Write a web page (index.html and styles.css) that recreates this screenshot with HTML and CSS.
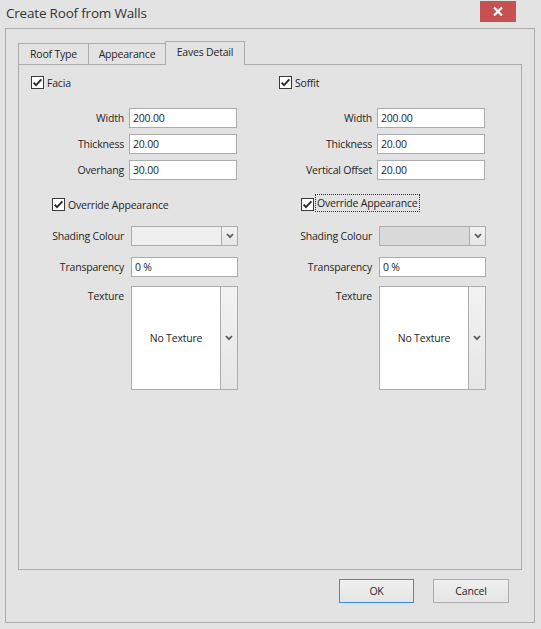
FILE: index.html
```html
<!DOCTYPE html>
<html>
<head>
<meta charset="utf-8">
<link rel="stylesheet" href="styles.css">
</head>
<body>
<div class="window">
  <div class="titlebar">
    <span class="title">Create Roof from Walls</span>
    <div class="close"><svg width="10" height="9" viewBox="0 0 10 9"><path d="M1 0.5 L9 8.5 M9 0.5 L1 8.5" stroke="#fff" stroke-width="2.2"/></svg></div>
  </div>
  <div class="frame">
    <div class="tabs">
      <div class="tab t1">Roof Type</div>
      <div class="tab t2">Appearance</div>
      <div class="tab t3 active">Eaves Detail</div>
    </div>
    <div class="page">
      <div class="col">
        <div class="check-row">
          <span class="cb"><svg width="11" height="11" viewBox="0 0 11 11"><polyline points="1.6,5.6 4,8.2 9.4,2.4" fill="none" stroke="#2b2b2b" stroke-width="1.9"/></svg></span>
          <span class="cb-label">Facia</span>
        </div>
        <div class="fields">
          <label>Width</label><div class="input">200.00</div>
          <label>Thickness</label><div class="input">20.00</div>
          <label>Overhang</label><div class="input">30.00</div>
        </div>
        <div class="check-row override">
          <span class="cb"><svg width="11" height="11" viewBox="0 0 11 11"><polyline points="1.6,5.6 4,8.2 9.4,2.4" fill="none" stroke="#2b2b2b" stroke-width="1.9"/></svg></span>
          <span class="cb-label">Override Appearance</span>
        </div>
        <div class="appear">
          <label>Shading Colour</label>
          <div class="combo"><div class="combo-field"></div><div class="combo-btn"><svg width="8" height="6" viewBox="0 0 8 6"><polyline points="1,1 4,4.2 7,1" fill="none" stroke="#5a5a5a" stroke-width="1.7"/></svg></div></div>
          <label class="r2">Transparency</label><div class="input r2 narrow">0 %</div>
          <label class="r3 top">Texture</label>
          <div class="texture r3"><div class="tex-view">No Texture</div><div class="tex-btn"><svg width="8" height="6" viewBox="0 0 8 6"><polyline points="1,1 4,4.2 7,1" fill="none" stroke="#5a5a5a" stroke-width="1.7"/></svg></div></div>
        </div>
      </div>
      <div class="col">
        <div class="check-row">
          <span class="cb"><svg width="11" height="11" viewBox="0 0 11 11"><polyline points="1.6,5.6 4,8.2 9.4,2.4" fill="none" stroke="#2b2b2b" stroke-width="1.9"/></svg></span>
          <span class="cb-label">Soffit</span>
        </div>
        <div class="fields">
          <label>Width</label><div class="input">200.00</div>
          <label>Thickness</label><div class="input">20.00</div>
          <label>Vertical Offset</label><div class="input">20.00</div>
        </div>
        <div class="check-row override right">
          <span class="cb"><svg width="11" height="11" viewBox="0 0 11 11"><polyline points="1.6,5.6 4,8.2 9.4,2.4" fill="none" stroke="#2b2b2b" stroke-width="1.9"/></svg></span>
          <span class="cb-label focus">Override Appearance</span>
        </div>
        <div class="appear">
          <label>Shading Colour</label>
          <div class="combo"><div class="combo-field disabled"></div><div class="combo-btn"><svg width="8" height="6" viewBox="0 0 8 6"><polyline points="1,1 4,4.2 7,1" fill="none" stroke="#5a5a5a" stroke-width="1.7"/></svg></div></div>
          <label class="r2">Transparency</label><div class="input r2 narrow">0 %</div>
          <label class="r3 top">Texture</label>
          <div class="texture r3"><div class="tex-view">No Texture</div><div class="tex-btn"><svg width="8" height="6" viewBox="0 0 8 6"><polyline points="1,1 4,4.2 7,1" fill="none" stroke="#5a5a5a" stroke-width="1.7"/></svg></div></div>
        </div>
      </div>
    </div>
    <div class="buttons">
      <div class="btn default">OK</div>
      <div class="btn">Cancel</div>
    </div>
  </div>
</div>
</body>
</html>
```

FILE: styles.css
```css
* { box-sizing: border-box; }
html, body { margin: 0; padding: 0; }
body {
  background: #e3e3e3;
  font-family: "Open Sans", "Noto Sans", sans-serif;
  font-size: 10.5px;
  letter-spacing: -0.2px;
  color: #262626;
}
.window { width: 541px; height: 629px; background: #e3e3e3; }
.titlebar {
  height: 28px;
  display: flex;
  justify-content: space-between;
  align-items: flex-start;
}
.title {
  font-size: 13.5px;
  letter-spacing: -0.2px;
  line-height: 20px;
  padding: 3px 0 0 6px;
  color: #333;
}
.close {
  width: 36px;
  height: 21px;
  margin: 1px 25px 0 0;
  background: #c75050;
  display: flex;
  align-items: center;
  justify-content: center;
}
.close svg { display: block; }
.frame {
  margin-left: 5px;
  width: 530px;
  height: 595px;
  border: 1px solid #acacac;
  padding: 12px 12px 0 12px;
}
.tabs {
  display: flex;
  align-items: flex-end;
  height: 23px;
}
.tab {
  height: 21px;
  border: 1px solid #acacac;
  border-bottom: none;
  text-align: center;
  line-height: 20px;
}
.t1 { width: 71px; }
.t2 { width: 78px; margin-left: -1px; }
.t3 { width: 80px; margin-left: -1px; }
.tab.active {
  height: 24px;
  margin-bottom: -1px;
  line-height: 20px;
  background: #e3e3e3;
  position: relative;
  z-index: 1;
}
.page {
  height: 506px;
  border: 1px solid #acacac;
  padding: 11px 0 0 12px;
  display: flex;
}
.col {
  width: 248px;
  flex: none;
  display: flex;
  flex-direction: column;
}
.check-row {
  display: flex;
  align-items: center;
  height: 13px;
}
.cb {
  width: 13px;
  height: 13px;
  border: 1px solid #3a3a3a;
  background: #fff;
  display: flex;
  align-items: center;
  justify-content: center;
  flex: none;
}
.cb svg { display: block; }
.cb-label { margin-left: 3px; line-height: 16px; white-space: nowrap; }
.cb-label.focus {
  outline: 1px dotted #333;
  margin-left: 2px;
  padding: 0 1px;
  margin-top: -4px;
}
.override.right { margin-left: 22px; }
.fields {
  display: grid;
  grid-template-columns: 93px 108px;
  column-gap: 5px;
  row-gap: 6px;
  margin-top: 19px;
}
label {
  text-align: right;
  line-height: 20px;
  white-space: nowrap;
}
.input {
  height: 20px;
  border: 1px solid #acacac;
  background: #fff;
  padding-left: 3px;
  line-height: 18px;
  color: #1e1e1e;
}
.override { margin-top: 18px; margin-left: 21px; }
.appear {
  display: grid;
  grid-template-columns: 93px 107px;
  column-gap: 7px;
  margin-top: 15px;
}
.r2 { margin-top: 11px; }
.r3 { margin-top: 9px; }
label.top { line-height: 16px; padding-top: 2px; }
.combo {
  height: 20px;
  border: 1px solid #acacac;
  display: flex;
}
.combo-field { flex: 1; background: #efefef; }
.combo-field.disabled { background: #dadada; }
.combo-btn, .tex-btn {
  width: 16px;
  border-left: 1px solid #acacac;
  background: linear-gradient(#f2f2f2, #e6e6e6);
  display: flex;
  align-items: center;
  justify-content: center;
}
.tex-btn { width: 17px; }
.combo-btn svg, .tex-btn svg { display: block; }
.texture {
  height: 104px;
  border: 1px solid #acacac;
  display: flex;
}
.tex-view {
  flex: 1;
  background: #fff;
  display: flex;
  align-items: center;
  justify-content: center;
}
.buttons {
  display: flex;
  justify-content: flex-end;
  gap: 19px;
  margin-top: 9px;
  padding-right: 13px;
}
.btn {
  width: 75px;
  height: 24px;
  border: 1px solid #acacac;
  background: linear-gradient(#efefef, #e5e5e5);
  text-align: center;
  line-height: 22px;
}
.btn + .btn { width: 76px; }
.btn.default { border-color: #3c8ce6; }
```
